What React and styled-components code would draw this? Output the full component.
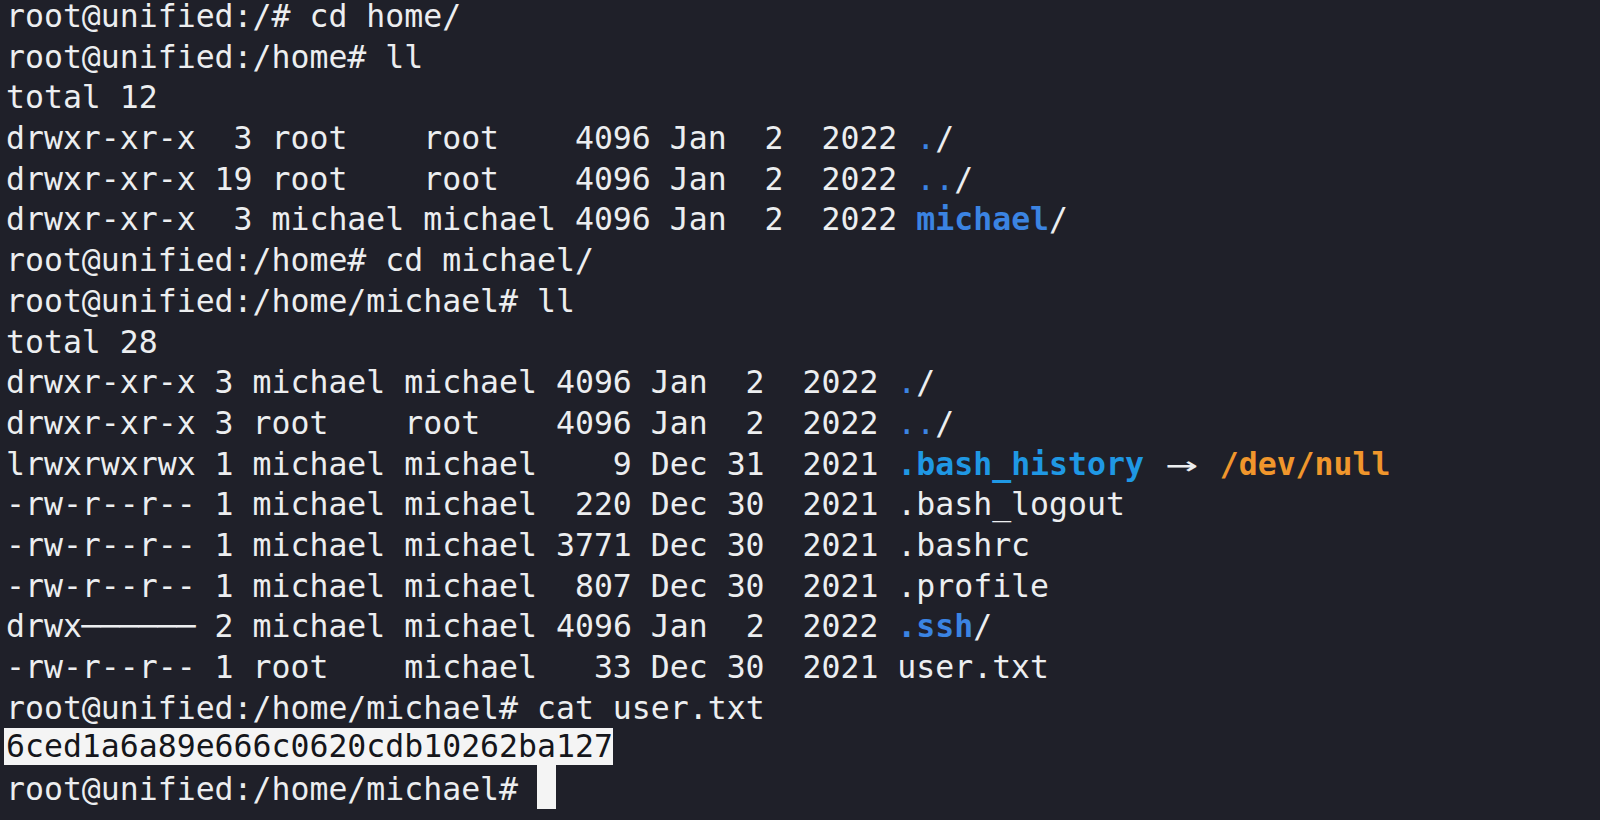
import React from 'react'
import styled, { createGlobalStyle } from 'styled-components'

const Global = createGlobalStyle`
  html, body {
    margin: 0;
    padding: 0;
    background: #1f2029;
  }
`
const Screen = styled.div`
  width: 1600px;
  height: 820px;
  overflow: hidden;
  box-sizing: border-box;
  padding: 0 0 0 6px;
  margin-top: -4px;
  background: #1f2029;
  color: #eceef0;
  font-family: 'DejaVu Sans Mono', 'Liberation Mono', monospace;
  font-size: 31.5px;
`
const Line = styled.div`
  height: 40.7px;
  line-height: 40.7px;
  white-space: pre;
`
const Dir = styled.span`
  color: #3b84e2;
  font-weight: ${(p) => (p.$bold ? 700 : 400)};
`
const Link = styled.span`
  color: #1f98e4;
  font-weight: 700;
`
const Target = styled.span`
  color: #f0962c;
  font-weight: 700;
`
const Arrow = styled.span`
  display: inline-block;
  width: 2ch;
  text-align: center;
  color: #eceef0;
  transform: scaleX(1.7);
`
const Dashes = styled.span`
  letter-spacing: 0;
`
const Selected = styled.span`
  display: inline-block;
  height: 37px;
  line-height: 37px;
  margin-left: -2px;
  padding: 0 0 0 2px;
  vertical-align: top;
  background: #f4f4f4;
  color: #15161b;
`
const Cursor = styled.span`
  display: inline-block;
  width: 1ch;
  height: 44px;
  margin-top: -4px;
  vertical-align: top;
  background: #f4f4f4;
`

const prompt = (path) => `root@unified:${path}# `

export default function App() {
  return (
    <>
      <Global />
      <Screen>
        <Line>{prompt('/')}cd home/</Line>
        <Line>{prompt('/home')}ll</Line>
        <Line>total 12</Line>
        <Line>drwxr-xr-x  3 root    root    4096 Jan  2  2022 <Dir>.</Dir>/</Line>
        <Line>drwxr-xr-x 19 root    root    4096 Jan  2  2022 <Dir>..</Dir>/</Line>
        <Line>drwxr-xr-x  3 michael michael 4096 Jan  2  2022 <Dir $bold>michael</Dir>/</Line>
        <Line>{prompt('/home')}cd michael/</Line>
        <Line>{prompt('/home/michael')}ll</Line>
        <Line>total 28</Line>
        <Line>drwxr-xr-x 3 michael michael 4096 Jan  2  2022 <Dir>.</Dir>/</Line>
        <Line>drwxr-xr-x 3 root    root    4096 Jan  2  2022 <Dir>..</Dir>/</Line>
        <Line>
          lrwxrwxrwx 1 michael michael    9 Dec 31  2021 <Link>.bash_history</Link> <Arrow>→</Arrow> <Target>/dev/null</Target>
        </Line>
        <Line>-rw-r--r-- 1 michael michael  220 Dec 30  2021 .bash_logout</Line>
        <Line>-rw-r--r-- 1 michael michael 3771 Dec 30  2021 .bashrc</Line>
        <Line>-rw-r--r-- 1 michael michael  807 Dec 30  2021 .profile</Line>
        <Line>drwx<Dashes>──────</Dashes> 2 michael michael 4096 Jan  2  2022 <Dir $bold>.ssh</Dir>/</Line>
        <Line>-rw-r--r-- 1 root    michael   33 Dec 30  2021 user.txt</Line>
        <Line>{prompt('/home/michael')}cat user.txt</Line>
        <Line><Selected>6ced1a6a89e666c0620cdb10262ba127</Selected></Line>
        <Line>{prompt('/home/michael')}<Cursor /></Line>
      </Screen>
    </>
  )
}
